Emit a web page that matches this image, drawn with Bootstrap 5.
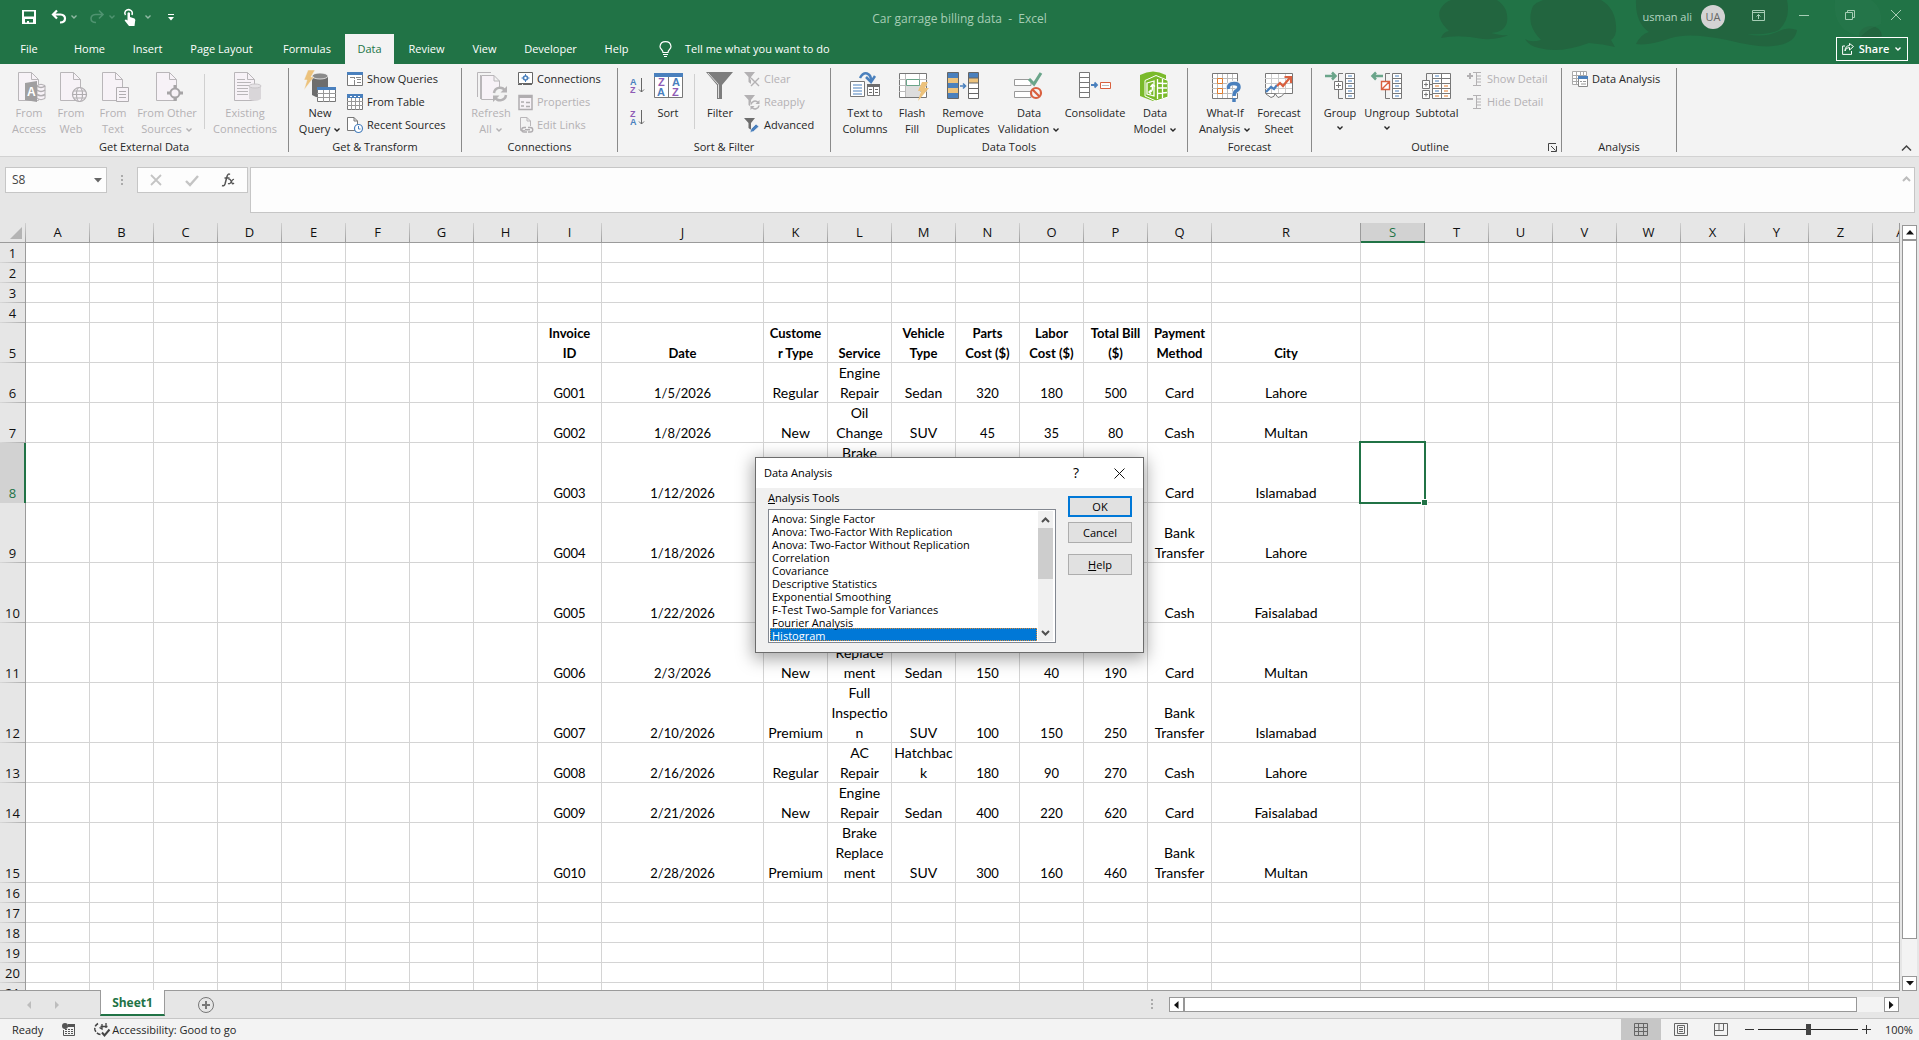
<!DOCTYPE html>
<html lang="en">
<head>
<meta charset="utf-8">
<meta name="viewport" content="width=device-width, initial-scale=1">
<title>Car garrage billing data - Excel</title>
<link href="https://cdn.jsdelivr.net/npm/bootstrap@5.3.0/dist/css/bootstrap.min.css" rel="stylesheet">
<style>
:root{--xl-green:#217346;--ui:"Open Sans","Noto Sans",sans-serif;--cellfont:Lato,"Open Sans",sans-serif}
body{font-family:var(--ui);font-size:11px;line-height:16px;color:#262626;background:#e6e6e6;overflow:hidden}
svg{display:block;flex:none;overflow:visible}
button,.btn{font-family:inherit;font-size:11px;line-height:16px;color:inherit;background:none;border:0;padding:0;border-radius:0}
.grow{flex:1 1 0;min-width:0}
.xl-head{background:var(--xl-green);color:#fff}
.xl-clouds{position:absolute;right:0;top:0}
.title-row{height:34px}
.title-text{color:#a6cdb5;font-size:12px;white-space:pre}
.save-btn{margin-left:22px}
.dim{color:#4f9370}
.win-btn{width:46px;height:30px;display:flex;align-items:center;justify-content:center}
.user-name{color:#b4d5c1}
.avatar{width:24px;height:24px;border-radius:50%;background:#d3d3d3;color:#666;margin:0 10px 0 9px}
.tab-row{height:30px}
.tab-row .nav-link{height:30px;line-height:30px;padding:0;text-align:center;color:#fff}
.tab-row .nav-link.active{background:#f3f3f3;color:var(--xl-green)}
.t49{width:49px}.t51{width:51px}.t53{width:53px}.t58{width:58px}.t63{width:63px}.t65{width:65px}.t76{width:76px}.t81{width:81px}.t95{width:95px}
.tell{margin-left:17px;gap:13px;color:#fff}
.share-btn{height:24px;width:72px;border:1px solid #fff;font-weight:600;color:#fff;margin-right:11px;gap:5px}
.ribbon{background:#f3f3f3;border-bottom:1px solid #d2d2d2;height:93px}
.rgroup{border-right:1px solid #8a8a8a;margin:4px 0;height:84px;display:flex;flex-direction:column;flex:none}
.rbody{height:68px;display:flex;padding-top:3px;flex:none}
.rlabel{height:16px;line-height:16px;text-align:center;position:relative;top:3px}
.g289{width:289px}.g173{width:173px}.g156{width:156px}.g213{width:213px}.g357{width:357px}.g124{width:124px}.g250{width:250px}.g115{width:115px}
.in5{padding-left:5px}.in6{padding-left:6px}.in8{padding-left:8px}.in10{padding-left:10px}
.big{display:flex;flex-direction:column;align-items:center;white-space:nowrap;flex:none}
.big svg.ic{margin-bottom:2px}
.w36{width:36px}.w40{width:40px}.w42{width:42px}.w44{width:44px}.w50{width:50px}.w54{width:54px}.w58{width:58px}.w66{width:66px}.w70{width:70px}.w74{width:74px}
.chev{display:inline-block;vertical-align:middle}
.off{color:#b3b1b3}
.vsep{width:1px;background:#d0d0d0;height:55px;margin:3px 3px 0 4px;flex:none}
.stack{display:flex;flex-direction:column;margin:-4px 0 0 2px}
.stack-in{margin-left:5px}
.small-btn{height:23px;display:flex;align-items:center;gap:4px;white-space:nowrap}
.collapse-btn{margin:0 7px 5px auto}
.fbar{padding:10px 4px 10px 5px;height:66px;align-items:flex-start}
.namebox{width:102px;height:26px;border:1px solid #c6c6c6;background:#fdfdfd}
.namebox input{width:70px;border:0;background:none;padding:0 0 0 6px;font-size:12px;color:#444;outline:0}
.fdots{margin:8px 0 0 14px}
.fbtns{width:111px;height:26px;border:1px solid #c6c6c6;background:#fdfdfd;margin-left:14px;padding:0 12px}
.ftext{height:46px;border:1px solid #c6c6c6;background:#fdfdfd;margin-left:2px;padding-right:3px}
.ftext input{border:0;background:none;outline:0;height:44px}
.sheet-area{flex:1 1 0;min-height:0}
.gridbox{overflow:hidden;border-bottom:1px solid #9b9b9b;position:relative;background:#fff}
.xl-grid{table-layout:fixed;border-collapse:separate;border-spacing:0;width:1937px;font-family:var(--cellfont);font-size:13px;line-height:20px;color:#000;text-align:center}
.xl-grid td,.xl-grid th{padding:0 1px 0 0;vertical-align:bottom;box-shadow:inset -1px -1px 0 #d4d4d4;white-space:nowrap}
.xl-grid td.word{font-size:14px}
.xl-grid th{font-family:var(--ui);font-size:13px;font-weight:400;background:#e6e6e6;color:#111}
.xl-grid thead th{height:20px;line-height:18px;vertical-align:top;box-shadow:inset 0 -1px 0 #9b9b9b;background:linear-gradient(#d0d0d0,#9b9b9b) right/1px 100% no-repeat #e6e6e6}
.xl-grid tbody th{box-shadow:inset -1px 0 0 #9b9b9b;background:linear-gradient(90deg,#d8d8d8,#ababab) bottom/100% 1px no-repeat #e6e6e6}
.xl-grid thead th.cur{background:#d2d2d2;color:var(--xl-green);box-shadow:inset 0 -2px 0 var(--xl-green),inset -1px 0 0 #9b9b9b,-1px 0 0 #9b9b9b}
.xl-grid tbody th.cur{background:#d2d2d2;color:var(--xl-green);box-shadow:inset -2px 0 0 var(--xl-green)}
.h20{height:20px}.h40{height:40px}.h60{height:60px}
.heads td{font-weight:700}
.c26{width:26px}.c64{width:64px}.c162{width:162px}.c149{width:149px}
td.sel{position:relative}
.sel-box{position:absolute;inset:-2px -1px -1px -2px;border:2px solid var(--xl-green)}
.sel-box::after{content:"";position:absolute;right:-4px;bottom:-4px;width:7px;height:7px;background:var(--xl-green);border:1px solid #fff}
.vscroll{width:20px;border-left:1px solid #9b9b9b;padding:2px 2px 0 2px}
.vscroll .track{background:#f3f3f3}
.sb-btn{width:15px;height:15px;border:1px solid #979797;background:#fff;display:flex;align-items:center;justify-content:center;flex:none}
.vthumb{border:1px solid #979797;background:#fff;flex:0 0 95%}
.sheetbar{height:27px;padding-right:20px}
.tab-arrows{margin-left:24px}
.sheet-tab{width:65px;height:26px;margin:-1px 33px 0 40px;background:#fff;border-left:1px solid #9b9b9b;border-right:1px solid #9b9b9b;border-bottom:2px solid var(--xl-green);color:var(--xl-green);font-size:12px;font-weight:700;position:relative;line-height:26px;text-align:center;text-decoration:none}
.hscroll{width:730px;height:15px;background:#f3f3f3}
.hthumb{width:673px;border:1px solid #979797;background:#fff}
.status{height:22px;border-top:1px solid #c6c6c6;background:#f3f3f3;gap:19px;padding-left:12px}
.view-btn{width:40px;height:21px;display:flex;align-items:center;justify-content:center}
.view-btn.on{background:#c6c6c6}
.zoom{appearance:none;width:100px;height:14px;background:linear-gradient(#262626,#262626) center/100% 1px no-repeat;margin:0 4px}
.zoom::-webkit-slider-thumb{appearance:none;width:5px;height:11px;background:#444;border:0}
.zoom-val{margin-left:14px;width:34px}
.dlg{position:absolute;left:755px;top:457px;width:389px;height:196px;border:1px solid #6c6c6c;background:#f0f0f0;box-shadow:0 4px 16px 2px rgba(0,0,0,.35);color:#000}
.dlg-title{height:30px;background:#fff;padding:0 18px 0 8px;gap:35px}
.dlg-q{font-size:14px}
.dlg-left{padding:2px 0 0 12px}
.dlg-right{padding:8px 0 0 12px;gap:5px}
.dlg-help{margin-top:6px}
.list-wrap{width:288px;height:134px;border:1px solid #828790;padding:1px;background:#fff;margin-top:3px}
.dlg-list{height:130px;border:0;padding:0;background:#fff;font-family:var(--ui);font-size:11px;outline:0;overflow:hidden;border-radius:0;color:#000}
.dlg-list option{height:13px;min-height:13px;line-height:13px;padding:0 2px;font-size:11px;color:#000}
.dlg-list option:checked{background:linear-gradient(#0078d7,#0078d7);color:#fff;-webkit-text-fill-color:#fff;outline:1px dotted #d98a3a;outline-offset:-1px}
.list-scroll{width:15px;background:#f0f0f0;margin:0 1px}
.list-scroll button{height:17px;display:flex;align-items:center;justify-content:center}
.list-thumb{height:51px;background:#cdcdcd}
.dlg-btn{width:64px;height:21px;background:#e1e1e1;border:1px solid #adadad;line-height:17px;text-align:center}
.dlg-btn.main{border:2px solid #0078d7;line-height:16px}
</style>
</head>
<body>
<svg width="0" height="0" class="position-absolute" aria-hidden="true">
<symbol id="doc" viewBox="0 0 32 32"><path d="M5.500 1.500H18.500L25.500 8.500V29.500H5.500z" fill="#f7f2f7" stroke="#b9b6b9"/><path d="M18.500 1.500V8.500H25.500" fill="none" stroke="#b9b6b9"/></symbol>
<symbol id="chv" viewBox="0 0 8 6"><path d="M1.500 1.500L4 4L6.500 1.500" fill="none" stroke="currentColor" stroke-width="1.400"/></symbol>
<symbol id="fun" viewBox="0 0 16 16"><path d="M0 1H11L7 6V13L4.500 11V6z" fill="currentColor"/></symbol>
</svg>
<div class="d-flex flex-column vh-100 position-relative">
<header class="xl-head position-relative">
 <svg class="xl-clouds" width="540" height="64" viewBox="0 0 540 64"><g fill="#22653f"><path d="M72 0H118Q130 8 128 22Q126 32 112 33Q128 37 132 34Q120 40 104 39Q80 34 62 38Q64 32 70 31Q56 18 62 8Q66 2 72 0z"/><path d="M164 0H222Q236 8 237 26Q238 36 232 40L236 47Q224 44 210 43Q180 54 160 48Q150 46 146 39Q152 43 162 40Q146 24 154 6Q158 2 164 0z"/><path d="M257 0H408Q412 18 400 30Q392 35 368 34Q384 38 398 32Q408 26 418 30Q416 44 394 46Q380 48 348 40Q310 32 292 38Q270 46 257 44Q262 34 270 32Q256 22 257 0z"/><path d="M480 33Q484 26 492 26Q502 27 503 36Q492 40 480 36z"/></g><path d="M456 0h36q12 8 10 24q-10 3-20 12q-14-2-20-10q-8-10-6-26z" fill="#28784b" opacity=".5"/></svg>
 <div class="title-row d-flex position-relative">
  <div class="grow d-flex align-items-center">
   <button class="save-btn" aria-label="Save"><svg width="14" height="14" viewBox="0 0 14 14"><path fill="#fff" fill-rule="evenodd" d="M0 0H14V14H0zM2 1.500V6.500H12V1.500zM3 9V12.500H5V11H7V12.500H11V9z"/></svg></button>
   <button class="ms-3" aria-label="Undo"><svg width="14" height="14" viewBox="0 0 14 14"><path d="M5 0.500L1 4.500L5 8.500M1 4.500H8.500Q13 5 13 8.500Q13 12.500 8 12.500" fill="none" stroke="#fff" stroke-width="2.200"/></svg></button>
   <svg class="ms-1 text-white-50" width="8" height="6"><use href="#chv"/></svg>
   <button class="ms-2 ps-1" aria-label="Redo"><svg width="14" height="14" viewBox="0 0 14 14"><path d="M9 0.500L13 4.500L9 8.500M13 4.500H5.500Q1 5 1 8.500Q1 12.500 6 12.500" fill="none" stroke="#4f9370" stroke-width="1.600"/></svg></button>
   <svg class="ms-1 dim" width="8" height="6"><use href="#chv"/></svg>
   <button class="ms-2" aria-label="Touch mode"><svg width="12" height="17" viewBox="0 0 12 17"><path d="M1.500 6Q0 4 1.500 2Q4-.5 7 1.500Q9 3 8 6" fill="none" stroke="#fff" stroke-width="1.500"/><path d="M3.500 4Q4.700 2.500 6 4V8L10.500 9.500Q12 10.500 11 13L10.500 17H5L1 12Q0 10.500 2 10.500L3.500 11.500z" fill="#fff"/></svg></button>
   <svg class="ms-2 text-white-50" width="8" height="6"><use href="#chv"/></svg>
   <button class="ms-3" aria-label="Customize"><svg width="6" height="7" viewBox="0 0 6 7"><path d="M0 .5H6" stroke="#fff"/><path d="M0 3H6L3 6.500z" fill="#fff"/></svg></button>
  </div>
  <div class="title-text align-self-center pt-1">Car garrage billing data  -  Excel</div>
  <div class="grow d-flex justify-content-end">
   <span class="user-name align-self-center">usman ali</span>
   <span class="avatar d-flex align-items-center justify-content-center align-self-center">UA</span>
   <button class="win-btn" aria-label="Ribbon display"><svg width="13" height="11" viewBox="0 0 13 11"><path d="M.5.5H12.500V10.500H.5zM.5 2.500H12.500M6.500 9V4.500M4.500 6.500L6.500 4.500L8.500 6.500" fill="none" stroke="#a6cdb5"/></svg></button>
   <button class="win-btn" aria-label="Minimize"><svg width="10" height="1"><path d="M0 .5H10" stroke="#a6cdb5"/></svg></button>
   <button class="win-btn" aria-label="Restore"><svg width="10" height="10" viewBox="0 0 10 10"><path d="M.5 2.500H7.500V9.500H.5zM2.500 2.500V.5H9.500V7.500H7.500" fill="none" stroke="#a6cdb5"/></svg></button>
   <button class="win-btn" aria-label="Close"><svg width="10" height="10" viewBox="0 0 10 10"><path d="M0 0L10 10M10 0L0 10" stroke="#a6cdb5"/></svg></button>
  </div>
 </div>
 <nav class="tab-row d-flex position-relative">
  <a href="#" class="nav-link t58">File</a><a href="#" class="nav-link t63">Home</a><a href="#" class="nav-link t53">Insert</a><a href="#" class="nav-link t95">Page Layout</a><a href="#" class="nav-link t76">Formulas</a><a href="#" class="nav-link active t49">Data</a><a href="#" class="nav-link t65">Review</a><a href="#" class="nav-link t51">View</a><a href="#" class="nav-link t81">Developer</a><a href="#" class="nav-link t51">Help</a>
  <button class="tell d-flex align-items-center"><svg width="13" height="16" viewBox="0 0 13 16"><path d="M4 11.500Q4 10 2.500 8.500Q1 7 1 5.500Q1.500 .7 6.500 .7Q11.500 .7 12 5.500Q12 7 10.500 8.500Q9 10 9 11.500zM4 13.500H9M5 15.500H8" fill="none" stroke="#fff" stroke-width="1.200"/></svg>Tell me what you want to do</button>
  <button class="share-btn d-flex align-items-center justify-content-center ms-auto align-self-center"><svg width="12" height="12" viewBox="0 0 12 12"><path d="M3 3H.6V11.400H9.500V8M3 8Q3.500 4.500 7.500 4.500V7L11.500 3.500L7.500.5V2.500Q3 3 3 8z" fill="none" stroke="#fff"/></svg>Share<svg width="8" height="6"><use href="#chv"/></svg></button>
 </nav>
</header>

<section class="ribbon d-flex">
 <div class="rgroup g289"><div class="rbody in8">
  <button class="big off w42"><svg class="ic" width="32" height="32"><use href="#doc"/><path d="M24 14.500Q28 12 32 14.500V27.500Q28 30 24 27.500z" fill="#f7f2f7" stroke="#b0adb0"/><path d="M24 15Q28 18 32 15M24 19Q28 22 32 19M24 23.500Q28 26 32 23.500" fill="none" stroke="#b0adb0" stroke-width="1.500"/><path d="M12 12L24 10V31L12 29z" fill="#a19fa1"/><text x="14" y="25" font-family="Liberation Sans,sans-serif" font-size="12" font-weight="700" fill="#fff">A</text></svg>From<br>Access</button>
  <button class="big off w42"><svg class="ic" width="32" height="32"><use href="#doc"/><g fill="#f7f2f7" stroke="#b0adb0" stroke-width="1.200"><circle cx="24.500" cy="23.500" r="7"/><ellipse cx="24.500" cy="23.500" rx="3" ry="7"/><path d="M17.500 23.500H31.500M18.500 20H30.500M18.500 27H30.500"/></g></svg>From<br>Web</button>
  <button class="big off w42"><svg class="ic" width="32" height="32"><use href="#doc"/><path d="M19.500 16.500H31.500V30.500H19.500z" fill="#f7f2f7" stroke="#b0adb0"/><path d="M22 20.500H29M22 23.500H29M22 26.500H29" stroke="#b0adb0"/></svg>From<br>Text</button>
  <button class="big off w66"><svg class="ic" width="32" height="32"><use href="#doc"/><circle cx="24" cy="22" r="4.500" fill="#f7f2f7" stroke="#a6a4a6" stroke-width="2"/><path d="M24 14V17M24 27V30M16 22H19M29 22H32" stroke="#a6a4a6" stroke-width="3"/></svg>From Other<br><span>Sources <svg class="chev" width="8" height="6"><use href="#chv"/></svg></span></button>
  <span class="vsep"></span>
  <button class="big off w74"><svg class="ic" width="32" height="32"><use href="#doc"/><path d="M8 8.500H16M8 11.500H22M8 14.500H22M8 17.500H19M8 20.500H19M8 23.500H19" stroke="#b9b6b9"/><path d="M20 15V28Q26 32 32 28V15z" fill="#d9d6d9"/><ellipse cx="26" cy="15" rx="6" ry="2" fill="#e6e3e6" stroke="#c8c5c8"/></svg>Existing<br>Connections</button>
 </div><div class="rlabel">Get External Data</div></div>

 <div class="rgroup g173"><div class="rbody in6">
  <button class="big w50"><svg class="ic" width="32" height="32"><path d="M8 5V24Q16 29 24 24V5z" fill="#6d6d6d"/><ellipse cx="16" cy="5" rx="8" ry="3" fill="#8a8a8a" stroke="#f3f3f3" stroke-width=".8"/><path d="M4-1H11L7 6H10L0 19L3 9H0z" fill="#ecc27c" stroke="#f3f3f3" stroke-width=".5"/><path d="M13.500 16.500H31.500V30.500H13.500z" fill="#fff" stroke="#777"/><path d="M13 16H32V19H13z" fill="#4a80bd"/><path d="M13 22.500H32M13 26.500H32M19.500 19V31M25.500 19V31" stroke="#999"/></svg>New<br><span>Query <svg class="chev" width="8" height="6"><use href="#chv"/></svg></span></button>
  <div class="stack">
   <button class="small-btn"><svg width="16" height="16"><path d="M.5 1.500H15.500V14.500H.5z" fill="#fff" stroke="#777"/><path d="M0 1H16V4H0z" fill="#4a80bd"/><path d="M7.500 14V6.500M10 8.500H14M10 11.500H14M3 6.500H15" stroke="#888" stroke-dasharray="5 1"/></svg>Show Queries</button>
   <button class="small-btn"><svg width="16" height="16"><path d="M.5.5H15.500V15.500H.5z" fill="#fff" stroke="#777"/><path d="M0 0H16V4H0z" fill="#4a80bd"/><path d="M3 2.500H5M7 2.500H9M11 2.500H13" stroke="#fff"/><path d="M0 7.500H16M0 11.500H16M4.500 4V16M8.500 4V16M12.500 4V16" stroke="#999"/></svg>From Table</button>
   <button class="small-btn"><svg width="16" height="16"><path d="M.5.5H7L10.500 4V13.500H.5zM7 .5V4H10.500" fill="#fff" stroke="#777"/><circle cx="11.500" cy="11.500" r="4" fill="#fff" stroke="#4a80bd" stroke-width="1.200"/><path d="M11.500 9V12H13.500" fill="none" stroke="#4a80bd"/></svg>Recent Sources</button>
  </div>
 </div><div class="rlabel">Get &amp; Transform</div></div>

 <div class="rgroup g156"><div class="rbody in8">
  <button class="big off w42"><svg class="ic" width="32" height="32"><path d="M2.500 26V1.500H16M5.500 28V4" fill="none" stroke="#b9b6b9"/><path d="M6.500 4.500H19L24.500 10V28.500H6.500zM19 4.500V10H24.500" fill="#f7f2f7" stroke="#b9b6b9"/><circle cx="25" cy="23" r="7" fill="#f3f3f3"/><path d="M19 22A6 6 0 0 1 30 19.500M31 24A6 6 0 0 1 20 26.500" fill="none" stroke="#b5b3b5" stroke-width="2.500"/><path d="M32 15V21.500H25.500zM18 31V24.500H24.500z" fill="#b5b3b5"/></svg>Refresh<br><span>All <svg class="chev" width="8" height="6"><use href="#chv"/></svg></span></button>
  <div class="stack stack-in">
   <button class="small-btn"><svg width="16" height="16"><path d="M1.500 1.500H15.500V12.500H1.500z" fill="#fff" stroke="#666"/><path d="M1 13.500H5M6 13.500H15" stroke="#666"/><circle cx="8.500" cy="7" r="2" fill="none" stroke="#4a80bd" stroke-width="1.600"/><path d="M8.500 3V5M8.500 9V11M4.500 7H6.500M10.500 7H12.500" stroke="#4a80bd"/></svg>Connections</button>
   <button class="small-btn off"><svg width="16" height="16"><path d="M2 1.500H15V15.500H2z" fill="#f7f2f7" stroke="#b0adb0" stroke-width="1.500"/><path d="M2 2H15V4H2z" fill="#b0adb0"/><path d="M4 8H7M4 12H7M9 8.500H13M9 12.500H13" stroke="#b0adb0" stroke-width="1.500"/></svg>Properties</button>
   <button class="small-btn off"><svg width="16" height="16"><path d="M8 13.500H3.500V.5H10L13.500 4V9M10 .5V4H13.500" fill="none" stroke="#b9b6b9"/><path d="M9 10.500H7a2 2 0 0 0 0 4.500H10M11 10.500H13.500a2 2 0 0 1 0 4.500H11M8 12.700H13" fill="none" stroke="#b0adb0" stroke-width="1.400"/></svg>Edit Links</button>
  </div>
 </div><div class="rlabel">Connections</div></div>

 <div class="rgroup g213"><div class="rbody in8">
  <div class="d-flex flex-column ms-1 row-gap-3">
   <button aria-label="Sort ascending"><svg class="mt-2" width="16" height="16" viewBox="0 1 16 16" font-family="Liberation Sans,sans-serif" font-size="9" font-weight="700"><text x="0" y="7" fill="#4a80bd">A</text><text x="0" y="15" fill="#8e5bb5">Z</text><path d="M11.500 0V14M9 11.500L11.500 14L14 11.500" fill="none" stroke="#666"/></svg></button>
   <button aria-label="Sort descending"><svg width="16" height="16" viewBox="0 1 16 16" font-family="Liberation Sans,sans-serif" font-size="9" font-weight="700"><text x="0" y="7" fill="#8e5bb5">Z</text><text x="0" y="15" fill="#4a80bd">A</text><path d="M11.500 0V14M9 11.500L11.500 14L14 11.500" fill="none" stroke="#666"/></svg></button>
  </div>
  <button class="big w44"><svg class="ic" width="32" height="32" font-family="Liberation Sans,sans-serif" font-size="11" font-weight="700"><path d="M2.500 2.500H30.500V26.500H2.500z" fill="#fff" stroke="#777"/><path d="M2 2H31V6H2z" fill="#4a80bd"/><path d="M16.500 6V27" stroke="#777"/><text x="6" y="15" fill="#8e5bb5">Z</text><text x="5" y="25" fill="#4a80bd">A</text><text x="20" y="15" fill="#4a80bd">A</text><text x="20" y="25" fill="#8e5bb5">Z</text></svg>Sort</button>
  <span class="vsep"></span>
  <button class="big w44"><svg class="ic" width="32" height="32"><path d="M2 1H29L18 14V28H13V14z" fill="#7d7d7d"/><path d="M4 2L14.500 13.500V27" fill="none" stroke="#ddd"/></svg>Filter</button>
  <div class="stack">
   <button class="small-btn off"><svg width="16" height="16"><use href="#fun"/><path d="M7 7L15 15M15 7L7 15" stroke="#f3f3f3" stroke-width="3"/><path d="M7 7L15 15M15 7L7 15" stroke="currentColor" stroke-width="1.400"/></svg>Clear</button>
   <button class="small-btn off"><svg width="16" height="16"><use href="#fun"/><circle cx="11" cy="11" r="5" fill="#f3f3f3"/><path d="M7 10.500A4 4 0 0 1 14 8.500M15 11.500A4 4 0 0 1 8 13.500" fill="none" stroke="currentColor" stroke-width="1.600"/><path d="M15.500 6V10H11.500zM6.500 16V12H10.500z" fill="currentColor"/></svg>Reapply</button>
   <button class="small-btn"><svg width="16" height="16"><g color="#6d6d6d"><use href="#fun"/></g><path d="M6 15.500L7 12L12 7L15 9.500L9.500 14.500z" fill="#4a80bd" stroke="#f3f3f3" stroke-width=".7"/></svg>Advanced</button>
  </div>
 </div><div class="rlabel">Sort &amp; Filter</div></div>

 <div class="rgroup g357"><div class="rbody in5">
  <button class="big w58"><svg class="ic" width="32" height="32"><path d="M1.500 10.500H15.500V25.500H1.500z" fill="#fff" stroke="#777"/><path d="M4 14H13M4 17H13M4 20H13M4 23H13" stroke="#4a80bd" stroke-width="1.200"/><path d="M18.500 14.500H30.500V24.500H18.500z" fill="#fff" stroke="#777"/><path d="M18 14.500H31M24.500 14V25M20 18.500H23M26 18.500H29M20 21.500H23M26 21.500H29" stroke="#6d6d6d"/><path d="M18 13H31V16H18z" fill="#6d6d6d"/><path d="M11 7Q14 1.500 18 2.500Q22 4 22 9" fill="none" stroke="#4a80bd" stroke-width="2.500"/><path d="M17 6L22 11L26 5" fill="none" stroke="#4a80bd" stroke-width="2.500"/></svg>Text to<br>Columns</button>
  <button class="big w36"><svg class="ic" width="32" height="32"><path d="M3.500 2.500H30.500V26.500H3.500z" fill="#fff" stroke="#777"/><path d="M3 8.500H31M3 14.500H31M3 20.500H31M9.500 3V26M23.500 3V8" stroke="#bbb"/><path d="M10 15H24V26H10z" fill="#ddd"/><path d="M10.500 8.500H23.500V14.500H10.500z" fill="#fff" stroke="#6aa58a"/><path d="M26 11H32L29 17H33L22 30L25 20H22z" fill="#ecc27c"/></svg>Flash<br>Fill</button>
  <button class="big w66"><svg class="ic" width="32" height="32"><path d="M.5 1.500H11.500V27.500H.5z" fill="#4a80bd" stroke="#666"/><path d="M1 7H11V12H1zM1 17H11V22H1z" fill="#ecc27c"/><path d="M13 15H18M16 12.500L18.500 15L16 17.500" fill="none" stroke="#4a80bd" stroke-width="1.600"/><path d="M21.500 1.500H31.500V27.500H21.500z" fill="#fff" stroke="#666"/><path d="M22 2H31V7H22z" fill="#4a80bd"/><path d="M22 7H31V12H22z" fill="#ecc27c"/><path d="M21 7H32M21 12H32M21 17.500H32M21 22.500H32" stroke="#666"/></svg>Remove<br>Duplicates</button>
  <button class="big w66"><svg class="ic" width="32" height="32"><path d="M1.500 8.500H18V14.500H1.500zM1.500 20.500H18V26.500H1.500z" fill="#fff" stroke="#999"/><path d="M16 8L21 13L28 2" fill="none" stroke="#6aa58a" stroke-width="3"/><circle cx="23" cy="22" r="5" fill="#f3f3f3" stroke="#d9603f" stroke-width="2.200"/><path d="M19.500 18.500L26.500 25.500" stroke="#d9603f" stroke-width="2.200"/></svg>Data<br><span>Validation <svg class="chev" width="8" height="6"><use href="#chv"/></svg></span></button>
  <button class="big w66"><svg class="ic" width="32" height="32"><path d="M.5 1.500H10.500V26.500H.5z" fill="#fff" stroke="#777"/><path d="M0 6.500H11M0 11.500H11M0 16.500H11M0 21.500H11" stroke="#777"/><path d="M12 14H18M15.500 11.500L18 14L15.500 16.500" fill="none" stroke="#4a80bd" stroke-width="1.800"/><path d="M21.500 11.500H31.500V17.500H21.500z" fill="#fff" stroke="#d9603f"/><path d="M23 14.500H30" stroke="#bbb"/></svg>Consolidate</button>
  <button class="big w54"><svg class="ic" width="32" height="32"><path d="M1 4Q14-3 27 4V25L14 30L1 25z" fill="#7aba2b"/><path d="M6 9.500L17 4.500L29 9.500V26L17 30L6 25z" fill="#7aba2b" stroke="#fff"/><path d="M18.500 8V28M18.500 12L28 12.500M18.500 17L28 17M18.500 22.500L28 21.500M23.500 8V27M8 12L15 10V25L8 23z" fill="none" stroke="#fff" stroke-width="1.300"/><path d="M10 21Q14 22 13.500 14M11.500 16L13.500 13.500L16 15.500M12 19L10 21L12 23" fill="none" stroke="#fff" stroke-width="1.400"/></svg>Data<br><span>Model <svg class="chev" width="8" height="6"><use href="#chv"/></svg></span></button>
 </div><div class="rlabel">Data Tools</div></div>

 <div class="rgroup g124"><div class="rbody in8">
  <button class="big w58"><svg class="ic" width="32" height="32"><path d="M3.500 2.500H28.500V27.500H3.500z" fill="#fff" stroke="#777"/><path d="M3 7.500H28M3 12.500H28M3 17.500H28M3 22.500H28M8.500 3V27M13.500 3V27M18.500 3V27M23.500 3V27" stroke="#bbb"/><path d="M8.500 7.500H13.500V12.500H8.500zM8.500 17.500H13.500V22.500H8.500z" fill="#fff" stroke="#e07b2b"/><path d="M19.500 18Q18.500 12 25 12Q30 12.500 30 16Q30 18.500 27 20Q25 21.500 25 25" fill="none" stroke="#f3f3f3" stroke-width="5"/><path d="M19.500 18Q18.500 12.500 25 12.500Q30 12.500 30 16Q30 18.500 27 20Q25 21.500 25 25M25 27V31" fill="none" stroke="#4a80bd" stroke-width="3.500"/></svg>What-If<br><span>Analysis <svg class="chev" width="8" height="6"><use href="#chv"/></svg></span></button>
  <button class="big w50"><svg class="ic" width="32" height="32"><path d="M2.500 2.500H29.500V22.500H2.500z" fill="#fff" stroke="#777"/><path d="M2 7.500H29M2 12.500H29M2 17.500H29M8.500 3V22M15.500 3V22M22.500 3V22" stroke="#ccc"/><path d="M3 23L8 26.500Q12 26 12 22.500L15 26.500Q19 26 21 22.500" fill="#fff" stroke="#777"/><path d="M3 21L8 16L11 18L14 14" fill="none" stroke="#4a80bd" stroke-width="2.200"/><path d="M14 15L17 12L20 15L27 6.500M21.500 6H28V12" fill="none" stroke="#d9603f" stroke-width="2.200"/></svg>Forecast<br>Sheet</button>
 </div><div class="rlabel">Forecast</div></div>

 <div class="rgroup g250"><div class="rbody in6">
  <button class="big w44"><svg class="ic" width="32" height="32"><path d="M1 5H11M8 1.500L11.500 5L8 8.500" fill="none" stroke="#6aa58a" stroke-width="2.500"/><path d="M14.500 10V2.500H19M14.500 19V27.500H19" fill="none" stroke="#777"/><path d="M10.500 10.500H18.500V18.500H10.500zM12 14.500H17M14.500 12V17" fill="#fff" stroke="#777"/><path d="M21.500 2.500H30.500V27.500H21.500zM21 7.500H31M21 12.500H31M21 17.500H31M21 22.500H31" fill="#fff" stroke="#777"/><path d="M24 5H28M24 10H28M24 15H28M24 20H28M24 25H28" stroke="#4a80bd"/></svg>Group<br><svg class="chev mt-1" width="8" height="6"><use href="#chv"/></svg></button>
  <button class="big w50"><svg class="ic" width="32" height="32"><path d="M12 5H2M5 1.500L1.500 5L5 8.500" fill="none" stroke="#6aa58a" stroke-width="2.500"/><path d="M14.500 10V2.500H19M14.500 19V27.500H19" fill="none" stroke="#777"/><path d="M10.500 10.500H18.500V18.500H10.500zM11 18L18 11" fill="#fff" stroke="#d9603f" stroke-width="1.400"/><path d="M21.500 2.500H30.500V27.500H21.500zM21 7.500H31M21 12.500H31M21 17.500H31M21 22.500H31" fill="#fff" stroke="#777"/><path d="M24 5H28M24 10H28M24 15H28M24 20H28M24 25H28" stroke="#4a80bd"/></svg>Ungroup<br><svg class="chev mt-1" width="8" height="6"><use href="#chv"/></svg></button>
  <button class="big w50"><svg class="ic" width="32" height="32"><path d="M5.500 10V2.500H11" fill="none" stroke="#777"/><path d="M1.500 9.500H8.500V17.500H1.500zM1.500 19.500H8.500V27.500H1.500zM3 13.500H7M5 11.500V15.500M3 23.500H7M5 21.500V25.500M8.500 13.500H11M8.500 23.500H11" fill="#fff" stroke="#777"/><path d="M11.500 2.500H29.500V27.500H11.500zM11 7.500H30M11 12.500H30M11 17.500H30M11 22.500H30M20.500 2V28" fill="#fff" stroke="#777"/><path d="M14 5H18M14 10H18M14 20H18" stroke="#4a80bd"/><path d="M14 15H18M23 15H27M14 25H18M23 25H27M23 20H27" stroke="#e07b2b"/></svg>Subtotal</button>
  <div class="stack stack-in">
   <button class="small-btn off"><svg width="16" height="16"><path d="M0 5H6M3 2V8" stroke="currentColor" stroke-width="2"/><path d="M6 1.500H14M9 5H14M9 8H14M9 11H14M6 14.500H14M9.500 2V14" stroke="currentColor"/></svg>Show Detail</button>
   <button class="small-btn off"><svg width="16" height="16"><path d="M0 5H6" stroke="currentColor" stroke-width="2"/><path d="M6 1.500H14M9 5H14M9 8H14M9 11H14M6 14.500H14M9.500 2V14" stroke="currentColor"/></svg>Hide Detail</button>
  </div>
 </div><div class="rlabel d-flex align-items-center"><span class="flex-fill">Outline</span><button class="me-1" aria-label="Outline settings"><svg width="9" height="9" viewBox="0 0 9 9"><path d="M.5 8V.5H8M3 3L7.500 7.500M8.500 3V8.500H3" fill="none" stroke="#444"/></svg></button></div></div>

 <div class="rgroup g115"><div class="rbody in8"><div class="stack">
   <button class="small-btn"><svg width="16" height="16"><path d="M.5.5H14.500V13.500H.5zM0 4.500H15M0 7.500H7M0 10.500H7M4.500 0V14M8.500 0V5M11.500 0V5" fill="#fff" stroke="#aaa"/><path d="M6.500 6.500H15.500V15.500H6.500z" fill="#fff" stroke="#888"/><path d="M6 5H16V8H6z" fill="#4a80bd"/><path d="M8 10.500H10M11 10.500H14M9 13H14" stroke="#999"/></svg>Data Analysis</button>
 </div></div><div class="rlabel">Analysis</div></div>
 <button class="collapse-btn align-self-end" aria-label="Collapse ribbon"><svg width="11" height="6" viewBox="0 0 11 6"><path d="M1 5.500L5.500 1L10 5.500" fill="none" stroke="#444" stroke-width="1.500"/></svg></button>
</section>

<section class="fbar d-flex">
 <div class="namebox d-flex align-items-center"><input value="S8" aria-label="Name box"><svg class="ms-auto me-1" width="8" height="5" viewBox="0 0 8 5"><path d="M0 0H8L4 4.500z" fill="#666"/></svg></div>
 <svg class="fdots" width="2" height="11"><path d="M1 0V11" stroke="#ababab" stroke-width="2" stroke-dasharray="2 2"/></svg>
 <div class="fbtns d-flex align-items-center justify-content-between">
  <svg width="12" height="10" viewBox="0 0 12 10"><path d="M1 0L11 10M11 0L1 10" stroke="#c4c4c4" stroke-width="1.800"/></svg>
  <svg width="14" height="11" viewBox="0 0 14 11"><path d="M1 6L5 10L13 1" fill="none" stroke="#c4c4c4" stroke-width="2.400"/></svg>
  <svg width="13" height="14" viewBox="0 0 13 14" fill="none" stroke="#555"><path d="M8 1.500Q6 0 5 3.500L3 11Q2.200 13.500 0 12.500M2.500 5H7.500" stroke-width="1.500"/><path d="M6.500 6.500Q8 5.500 9 8L10 10Q10.500 11.500 12 10M12 6.500Q10.500 6 9.500 8.500Q8 11.500 6 10.500" stroke-width="1.300"/></svg>
 </div>
 <div class="ftext d-flex grow"><input class="grow" aria-label="Formula bar"><svg class="mt-2" width="9" height="6" viewBox="0 0 9 6"><path d="M1 5L4.500 1.500L8 5" fill="none" stroke="#bdbdbd" stroke-width="2"/></svg></div>
</section>

<main class="sheet-area d-flex">
 <div class="gridbox grow"><table class="xl-grid"><colgroup id="cols"></colgroup><thead><tr id="heads"></tr></thead><tbody id="rows"></tbody></table></div>
 <div class="vscroll d-flex flex-column">
  <button class="sb-btn" aria-label="Scroll up"><svg width="8" height="5"><path d="M0 4.500L4 0L8 4.500z" fill="#111"/></svg></button>
  <div class="track flex-fill d-flex flex-column"><div class="vthumb"></div></div>
  <button class="sb-btn" aria-label="Scroll down"><svg width="8" height="5"><path d="M0 0L4 4.500L8 0z" fill="#111"/></svg></button>
 </div>
</main>

<section class="sheetbar d-flex align-items-center">
 <svg class="tab-arrows" width="36" height="8" viewBox="0 0 36 8"><path d="M7 0V8L3 4zM31 0V8L35 4z" fill="#bdbdbd"/></svg>
 <a href="#" class="sheet-tab align-self-start">Sheet1</a>
 <button aria-label="New sheet"><svg width="16" height="16" viewBox="0 0 16 16"><circle cx="8" cy="8" r="7.500" fill="none" stroke="#777"/><path d="M4 8H12M8 4V12" stroke="#777" stroke-width="2"/></svg></button>
 <svg class="ms-auto me-3" width="2" height="11"><path d="M1 0V11" stroke="#ababab" stroke-width="2" stroke-dasharray="2 2"/></svg>
 <div class="hscroll d-flex">
  <button class="sb-btn" aria-label="Scroll left"><svg width="5" height="8"><path d="M4.500 0V8L0 4z" fill="#111"/></svg></button><div class="hthumb"></div>
  <button class="sb-btn ms-auto" aria-label="Scroll right"><svg width="5" height="8"><path d="M0 0V8L4.500 4z" fill="#111"/></svg></button>
 </div>
</section>

<footer class="status d-flex align-items-center">
 <span>Ready</span>
 <svg width="13" height="13" viewBox="0 0 13 13"><path d="M6 1.500H12.500V12.500H1.500V7" fill="none" stroke="#555"/><path d="M6 1H13V4H6z" fill="#555"/><circle cx="3" cy="3" r="3" fill="#555"/><path d="M3 6.500H11M3 8.500H11M3 10.500H11" stroke="#555" stroke-dasharray="2 1"/></svg>
 <button class="d-flex align-items-center"><svg width="18" height="15" viewBox="0 0 18 15" fill="none" stroke="#444"><path d="M4 1.500Q0 4 1 8Q2.500 12 7 12.500" stroke-dasharray="4 1.500" stroke-width="1.500"/><path d="M6.500 4.500H13.500M8 2V7L5.500 5.500M12 1V6" stroke-width="1.300"/><path d="M8 10.500L10.500 13.500L15.500 7.500" stroke-width="2"/></svg>Accessibility: Good to go</button>
 <div class="d-flex align-items-center ms-auto">
 <button class="view-btn on" aria-label="Normal"><svg width="14" height="13" viewBox="0 0 14 13"><path d="M.5.5H13.500V12.500H.5zM.5 4.500H13.500M.5 8.500H13.500M4.500 0V13M9.500 0V13" fill="none" stroke="#666"/></svg></button>
 <button class="view-btn" aria-label="Page layout"><svg width="14" height="13" viewBox="0 0 14 13"><path d="M.5.5H13.500V12.500H.5zM3.500 2.500H10.500V10.500H3.500zM5 4.500H9M5 6.500H9M5 8.500H9" fill="none" stroke="#666"/></svg></button>
 <button class="view-btn" aria-label="Page break"><svg width="14" height="13" viewBox="0 0 14 13"><path d="M.5.5H13.500V12.500H.5zM.5 7.500H9.500V.5M5 .5V7.500" fill="none" stroke="#666"/></svg></button>
 <button class="ms-1" aria-label="Zoom out"><svg width="9" height="9"><path d="M0 4.500H9" stroke="#333"/></svg></button>
 <input type="range" class="zoom" min="10" max="190" value="100" aria-label="Zoom">
 <button aria-label="Zoom in"><svg width="9" height="9"><path d="M0 4.500H9M4.500 0V9" stroke="#333"/></svg></button>
 <span class="zoom-val">100%</span>
 </div>
</footer>

<div class="dlg" role="dialog" aria-label="Data Analysis">
 <div class="dlg-title d-flex align-items-center"><span>Data Analysis</span><button class="dlg-q ms-auto">?</button><button aria-label="Close"><svg width="11" height="11"><path d="M.5.5L10.500 10.500M10.500.5L.5 10.500" stroke="#111"/></svg></button></div>
 <div class="d-flex">
  <div class="dlg-left"><label class="d-block" for="tools"><u>A</u>nalysis Tools</label>
  <div class="list-wrap d-flex"><select class="dlg-list grow" id="tools" size="10"><option>Anova: Single Factor</option><option>Anova: Two-Factor With Replication</option><option>Anova: Two-Factor Without Replication</option><option>Correlation</option><option>Covariance</option><option>Descriptive Statistics</option><option>Exponential Smoothing</option><option>F-Test Two-Sample for Variances</option><option>Fourier Analysis</option><option selected>Histogram</option><option>Moving Average</option><option>Random Number Generation</option><option>Rank and Percentile</option><option>Regression</option><option>Sampling</option><option>t-Test: Paired Two Sample for Means</option><option>t-Test: Two-Sample Assuming Equal Variances</option><option>t-Test: Two-Sample Assuming Unequal Variances</option><option>z-Test: Two Sample for Means</option></select>
  <div class="list-scroll d-flex flex-column"><button aria-label="List up"><svg width="9" height="6"><path d="M1 5L4.500 1.500L8 5" fill="none" stroke="#505050" stroke-width="2"/></svg></button><div class="list-thumb"></div><button class="mt-auto" aria-label="List down"><svg width="9" height="6"><path d="M1 1L4.500 4.500L8 1" fill="none" stroke="#505050" stroke-width="2"/></svg></button></div></div></div>
  <div class="dlg-right d-flex flex-column"><button class="dlg-btn main">OK</button><button class="dlg-btn">Cancel</button><button class="dlg-btn dlg-help"><u>H</u>elp</button></div>
 </div>
</div>
</div>
<script src="https://cdn.jsdelivr.net/npm/bootstrap@5.3.0/dist/js/bootstrap.bundle.min.js"></script>
<script>
const letters=[..."ABCDEFGHIJKLMNOPQRSTUVWXYZ","AA"];
const wide={J:162,R:149};
const heights={5:40,6:40,7:40,8:60,9:60,10:60,11:60,12:60,13:40,14:40,15:60};
const data={
5:["Invoice|ID","Date","Custome|r Type","Service","Vehicle|Type","Parts|Cost ($)","Labor|Cost ($)","Total Bill|($)","Payment|Method","City"],
6:["G001","1/5/2026","Regular","Engine|Repair","Sedan",320,180,500,"Card","Lahore"],
7:["G002","1/8/2026","New","Oil|Change","SUV",45,35,80,"Cash","Multan"],
8:["G003","1/12/2026","","Brake|Replace|ment","","","","","Card","Islamabad"],
9:["G004","1/18/2026","","","","","","","Bank|Transfer","Lahore"],
10:["G005","1/22/2026","","","","","","","Cash","Faisalabad"],
11:["G006","2/3/2026","New","Replace|ment","Sedan",150,40,190,"Card","Multan"],
12:["G007","2/10/2026","Premium","Full|Inspectio|n","SUV",100,150,250,"Bank|Transfer","Islamabad"],
13:["G008","2/16/2026","Regular","AC|Repair","Hatchbac|k",180,90,270,"Cash","Lahore"],
14:["G009","2/21/2026","New","Engine|Repair","Sedan",400,220,620,"Card","Faisalabad"],
15:["G010","2/28/2026","Premium","Brake|Replace|ment","SUV",300,160,460,"Bank|Transfer","Multan"]};
document.getElementById("cols").innerHTML='<col class="c26">'+letters.map(l=>`<col class="c${wide[l]||64}">`).join("");
document.getElementById("heads").innerHTML='<th><svg width="25" height="19"><path d="M22 4V16H10z" fill="#b4b4b4"/></svg></th>'+letters.map(l=>`<th class="${l=="S"?"cur":""}">${l}</th>`).join("");
let out="";
for(let r=1;r<=21;r++){
 out+=`<tr class="h${heights[r]||20} ${r==5?"heads":""}"><th class="${r==8?"cur":""}">${r}</th>`+letters.map((l,i)=>{
  const v=data[r]&&i>=8&&i<18?String(data[r][i-8]).replaceAll("|","<br>"):"";
  const word=r>5&&/^[A-Za-z]{2}/.test(v)?' class="word"':"";
  return r==8&&l=="S"?'<td class="sel"><div class="sel-box"></div></td>':`<td${word}>${v}</td>`;}).join("")+"</tr>";
}
document.getElementById("rows").innerHTML=out;
</script>
</body>
</html>
